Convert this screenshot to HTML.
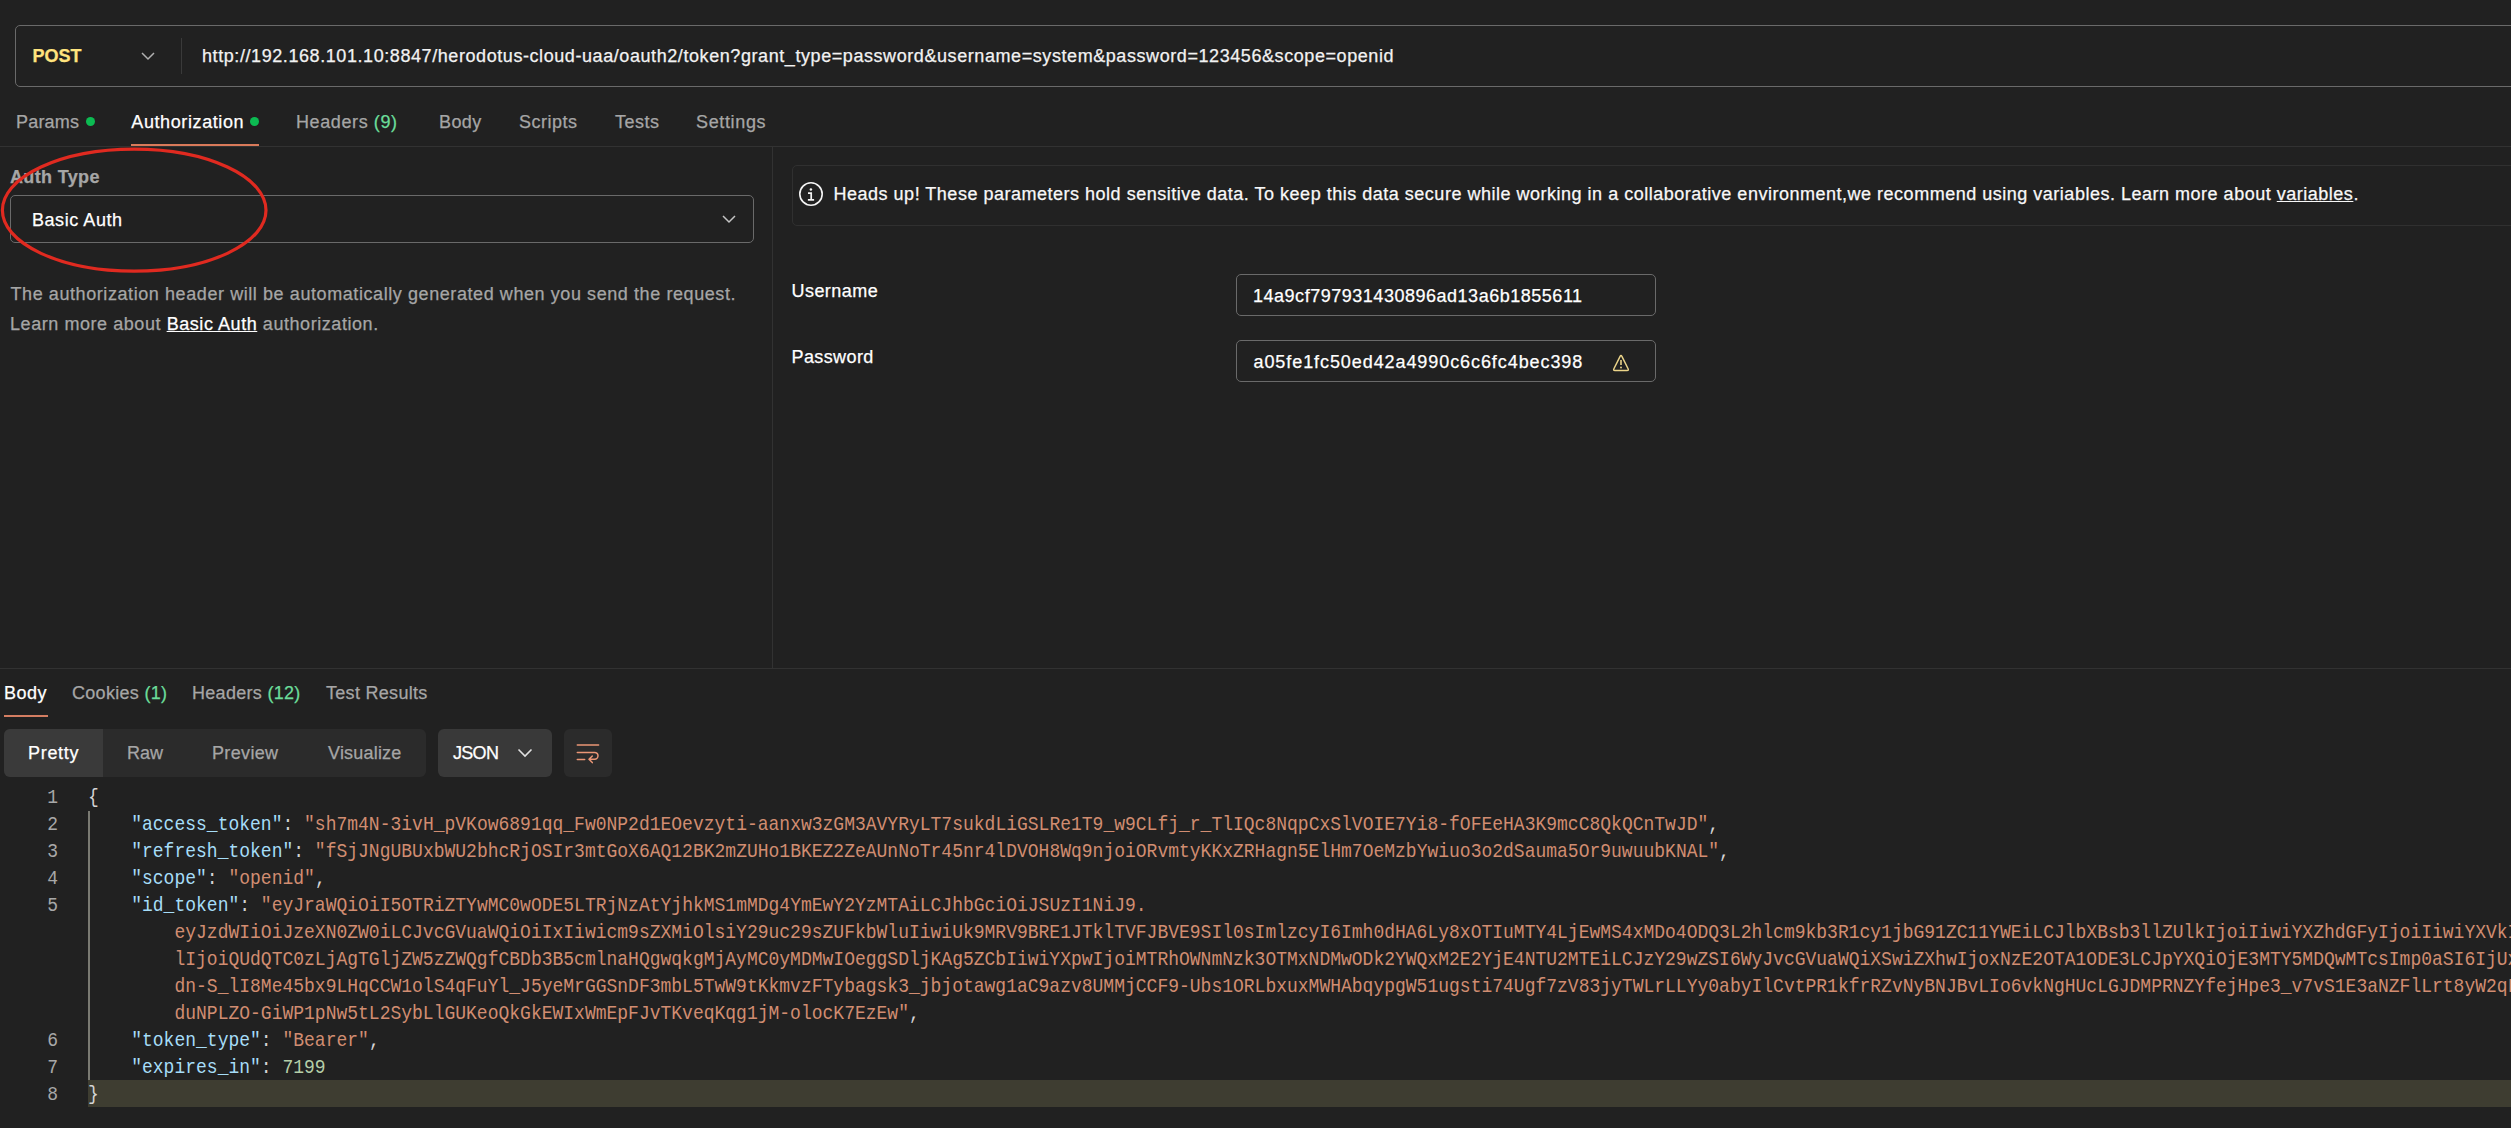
<!DOCTYPE html>
<html><head><meta charset="utf-8">
<style>
*{margin:0;padding:0;box-sizing:border-box}
html,body{width:2511px;height:1128px;overflow:hidden;background:#212121}
body{position:relative;font-family:"Liberation Sans",sans-serif;color:#fff}
.a{position:absolute;white-space:pre}
.t{position:absolute;white-space:pre;font-size:18px;line-height:20px;-webkit-text-stroke:0.25px currentColor}
.box{position:absolute;border:1px solid #6a6a6a;border-radius:5px}
.hl{position:absolute;background:#2f2f2f}
.grey{color:#a6a6a6}
.green{color:#6bdd9a}
.dot{display:inline-block;width:9px;height:9px;border-radius:50%;background:#0cbb52}
.code{position:absolute;left:0;top:0;font-family:"Liberation Mono",monospace;font-size:18px;line-height:27px;white-space:pre}
.ln{position:absolute;width:58px;text-align:right;color:#a8a8a8;font-family:"Liberation Mono",monospace;font-size:18px;line-height:27px;transform:scaleY(1.1);transform-origin:0 18.3px}
.row{position:absolute;left:88px;font-family:"Liberation Mono",monospace;font-size:18px;line-height:27px;white-space:pre;color:#d4d4d4;transform:scaleY(1.1);transform-origin:0 18.3px}
.k{color:#a6ddf8}.s{color:#d18d71}.n{color:#b5cea8}
</style></head><body>

<!-- URL bar -->
<div class="box" style="left:15px;top:25px;width:2520px;height:62px;border-color:#6a6a6a"></div>
<div class="t" style="left:32.5px;top:46px;font-weight:bold;color:#ffe47e">POST</div>
<svg class="a" style="left:140px;top:50px" width="16" height="12" viewBox="0 0 16 12"><path d="M2 3 L8 9 L14 3" fill="none" stroke="#b0b0b0" stroke-width="1.5"/></svg>
<div class="hl" style="left:181px;top:38px;width:1px;height:36px;background:#3a3a3a"></div>
<div class="t" style="left:202px;top:46px;letter-spacing:0.575px;color:#f2f2f2">http://192.168.101.10:8847/herodotus-cloud-uaa/oauth2/token?grant_type=password&amp;username=system&amp;password=123456&amp;scope=openid</div>

<!-- request tabs -->
<div class="t grey" style="left:16px;top:112px;letter-spacing:0.2px">Params</div>
<div class="dot a" style="left:86px;top:117px"></div>
<div class="t" style="left:131.3px;top:112px;letter-spacing:0.6px">Authorization</div>
<div class="dot a" style="left:250px;top:117px"></div>
<div class="hl" style="left:131px;top:144px;width:128px;height:2px;background:#d97a5a"></div>
<div class="t grey" style="left:296px;top:112px;letter-spacing:0.6px">Headers <span class="green">(9)</span></div>
<div class="t grey" style="left:439px;top:112px;letter-spacing:0.4px">Body</div>
<div class="t grey" style="left:519px;top:112px;letter-spacing:0.5px">Scripts</div>
<div class="t grey" style="left:615px;top:112px;letter-spacing:0.5px">Tests</div>
<div class="t grey" style="left:696px;top:112px;letter-spacing:0.65px">Settings</div>
<div class="hl" style="left:0;top:146px;width:2511px;height:1px;background:#323232"></div>
<div class="hl" style="left:772px;top:147px;width:1px;height:521px;background:#323232"></div>

<!-- left auth -->
<div class="t grey" style="left:10px;top:167px;font-weight:bold;letter-spacing:0.35px">Auth Type</div>
<div class="box" style="left:10px;top:195px;width:744px;height:48px"></div>
<div class="t" style="left:32px;top:210px;letter-spacing:0.55px">Basic Auth</div>
<svg class="a" style="left:721px;top:213px" width="16" height="12" viewBox="0 0 16 12"><path d="M2 3 L8 9 L14 3" fill="none" stroke="#c4c4c4" stroke-width="1.5"/></svg>
<div class="t grey" style="left:10.5px;top:284px;letter-spacing:0.58px">The authorization header will be automatically generated when you send the request.</div>
<div class="t grey" style="left:10px;top:314px;letter-spacing:0.56px">Learn more about <span style="color:#fff;text-decoration:underline">Basic Auth</span> authorization.</div>

<!-- ellipse -->
<svg class="a" style="left:0;top:140px" width="280" height="140" viewBox="0 140 280 140"><ellipse cx="134.2" cy="210.2" rx="131.8" ry="61" fill="none" stroke="#e02a20" stroke-width="3.2"/></svg>

<!-- right banner -->
<div class="box" style="left:792px;top:165px;width:1800px;height:61px;border-color:#303030"></div>
<svg class="a" style="left:798px;top:181px" width="26" height="26" viewBox="0 0 26 26"><circle cx="13" cy="13" r="11.2" fill="none" stroke="#f4f4f4" stroke-width="1.6"/><circle cx="12.9" cy="8.5" r="1.25" fill="#f4f4f4"/><path d="M10 12.2 H13.2 V18.9 M9.9 18.9 H16.1" fill="none" stroke="#f4f4f4" stroke-width="1.7"/></svg>
<div class="t" style="left:833.5px;top:184px;letter-spacing:0.51px;color:#f8f8f8">Heads up! These parameters hold sensitive data. To keep this data secure while working in a collaborative environment,we recommend using variables. Learn more about <span style="text-decoration:underline">variables</span>.</div>

<div class="t" style="left:791.5px;top:281px;letter-spacing:0.45px">Username</div>
<div class="t" style="left:791.5px;top:347px;letter-spacing:0.4px">Password</div>
<div class="box" style="left:1236px;top:274px;width:420px;height:42px"></div>
<div class="box" style="left:1236px;top:340px;width:420px;height:42px"></div>
<div class="t" style="left:1253px;top:286px;letter-spacing:0.52px">14a9cf797931430896ad13a6b1855611</div>
<div class="t" style="left:1253.5px;top:352px;letter-spacing:0.92px">a05fe1fc50ed42a4990c6c6fc4bec398</div>
<svg class="a" style="left:1610px;top:353px" width="22" height="20" viewBox="0 0 22 20"><path d="M10.1 3.39 Q11 1.6 11.9 3.39 L18.1 15.71 Q19 17.5 17 17.5 H5 Q3 17.5 3.9 15.71 Z" fill="none" stroke="#ecd58a" stroke-width="1.45" stroke-linejoin="round"/><path d="M11 6.9 V11.9" stroke="#ecd58a" stroke-width="1.6"/><circle cx="11" cy="14.5" r="0.95" fill="#ecd58a"/></svg>

<!-- response -->
<div class="hl" style="left:0;top:668px;width:2511px;height:1px;background:#323232"></div>
<div class="t" style="left:4px;top:683px;letter-spacing:0.5px">Body</div>
<div class="hl" style="left:4px;top:715px;width:44px;height:2px;background:#d47e62"></div>
<div class="t grey" style="left:72px;top:683px;letter-spacing:0.3px">Cookies <span class="green">(1)</span></div>
<div class="t grey" style="left:192px;top:683px;letter-spacing:0.3px">Headers <span class="green">(12)</span></div>
<div class="t grey" style="left:326px;top:683px;letter-spacing:0.3px">Test Results</div>

<div class="hl" style="left:4px;top:729px;width:422px;height:48px;background:#2b2b2b;border-radius:6px"></div>
<div class="hl" style="left:4px;top:729px;width:99px;height:48px;background:#3a3a3a;border-radius:6px 0 0 6px"></div>
<div class="t" style="left:28px;top:743px;letter-spacing:0.7px">Pretty</div>
<div class="t grey" style="left:127px;top:743px">Raw</div>
<div class="t grey" style="left:212px;top:743px;letter-spacing:0.35px">Preview</div>
<div class="t grey" style="left:328px;top:743px;letter-spacing:0.2px">Visualize</div>
<div class="hl" style="left:438px;top:729px;width:114px;height:48px;background:#393939;border-radius:6px"></div>
<div class="t" style="left:453px;top:743px;letter-spacing:-0.7px">JSON</div>
<svg class="a" style="left:516px;top:746px" width="18" height="14" viewBox="0 0 18 14"><path d="M2.5 3.5 L9 10 L15.5 3.5" fill="none" stroke="#e0e0e0" stroke-width="1.6"/></svg>
<div class="hl" style="left:564px;top:729px;width:48px;height:48px;background:#2b2b2b;border-radius:6px"></div>
<svg class="a" style="left:568px;top:736px" width="40" height="34" viewBox="568 736 40 34"><path d="M577.3 745 H598.6 M577.3 752.4 H594.6 A3.4 3.4 0 0 1 594.6 759.2 H589.2 M592.3 756 L589 759.2 L592.3 762.6 M577.3 759.6 H584.7" fill="none" stroke="#ea9676" stroke-width="1.5" stroke-linecap="round" stroke-linejoin="round"/></svg>

<!-- code -->
<div class="hl" style="left:88px;top:1080px;width:2423px;height:27px;background:#3e3d31"></div>
<div class="hl" style="left:87.5px;top:811px;width:2px;height:269px;background:#7a7a72"></div>
<div id="code">
<div class="ln" style="left:0;top:785px">1</div>
<div class="row" style="top:785px">{</div>
<div class="ln" style="left:0;top:812px">2</div>
<div class="row" style="top:812px">    <span class="k">"access_token"</span>: <span class="s">"sh7m4N-3ivH_pVKow6891qq_Fw0NP2d1EOevzyti-aanxw3zGM3AVYRyLT7sukdLiGSLRe1T9_w9CLfj_r_TlIQc8NqpCxSlVOIE7Yi8-fOFEeHA3K9mcC8QkQCnTwJD"</span>,</div>
<div class="ln" style="left:0;top:839px">3</div>
<div class="row" style="top:839px">    <span class="k">"refresh_token"</span>: <span class="s">"fSjJNgUBUxbWU2bhcRjOSIr3mtGoX6AQ12BK2mZUHo1BKEZ2ZeAUnNoTr45nr4lDVOH8Wq9njoiORvmtyKKxZRHagn5ElHm7OeMzbYwiuo3o2dSauma5Or9uwuubKNAL"</span>,</div>
<div class="ln" style="left:0;top:866px">4</div>
<div class="row" style="top:866px">    <span class="k">"scope"</span>: <span class="s">"openid"</span>,</div>
<div class="ln" style="left:0;top:893px">5</div>
<div class="row" style="top:893px">    <span class="k">"id_token"</span>: <span class="s">"eyJraWQiOiI5OTRiZTYwMC0wODE5LTRjNzAtYjhkMS1mMDg4YmEwY2YzMTAiLCJhbGciOiJSUzI1NiJ9.</span></div>
<div class="row" style="top:920px">        <span class="s">eyJzdWIiOiJzeXN0ZW0iLCJvcGVuaWQiOiIxIiwicm9sZXMiOlsiY29uc29sZUFkbWluIiwiUk9MRV9BRE1JTklTVFJBVE9SIl0sImlzcyI6Imh0dHA6Ly8xOTIuMTY4LjEwMS4xMDo4ODQ3L2hlcm9kb3R1cy1jbG91ZC11YWEiLCJlbXBsb3llZUlkIjoiIiwiYXZhdGFyIjoiIiwiYXVkI</span></div>
<div class="row" style="top:947px">        <span class="s">lIjoiQUdQTC0zLjAgTGljZW5zZWQgfCBDb3B5cmlnaHQgwqkgMjAyMC0yMDMwIOeggSDljKAg5ZCbIiwiYXpwIjoiMTRhOWNmNzk3OTMxNDMwODk2YWQxM2E2YjE4NTU2MTEiLCJzY29wZSI6WyJvcGVuaWQiXSwiZXhwIjoxNzE2OTA1ODE3LCJpYXQiOjE3MTY5MDQwMTcsImp0aSI6IjUx</span></div>
<div class="row" style="top:974px">        <span class="s">dn-S_lI8Me45bx9LHqCCW1olS4qFuYl_J5yeMrGGSnDF3mbL5TwW9tKkmvzFTybagsk3_jbjotawg1aC9azv8UMMjCCF9-Ubs1ORLbxuxMWHAbqypgW51ugsti74Ugf7zV83jyTWLrLLYy0abyIlCvtPR1kfrRZvNyBNJBvLIo6vkNgHUcLGJDMPRNZYfejHpe3_v7vS1E3aNZFlLrt8yW2qL</span></div>
<div class="row" style="top:1001px">        <span class="s">duNPLZO-GiWP1pNw5tL2SybLlGUKeoQkGkEWIxWmEpFJvTKveqKqg1jM-olocK7EzEw"</span>,</div>
<div class="ln" style="left:0;top:1028px">6</div>
<div class="row" style="top:1028px">    <span class="k">"token_type"</span>: <span class="s">"Bearer"</span>,</div>
<div class="ln" style="left:0;top:1055px">7</div>
<div class="row" style="top:1055px">    <span class="k">"expires_in"</span>: <span class="n">7199</span></div>
<div class="ln" style="left:0;top:1082px">8</div>
<div class="row" style="top:1082px">}</div>
</div>
</body></html>
